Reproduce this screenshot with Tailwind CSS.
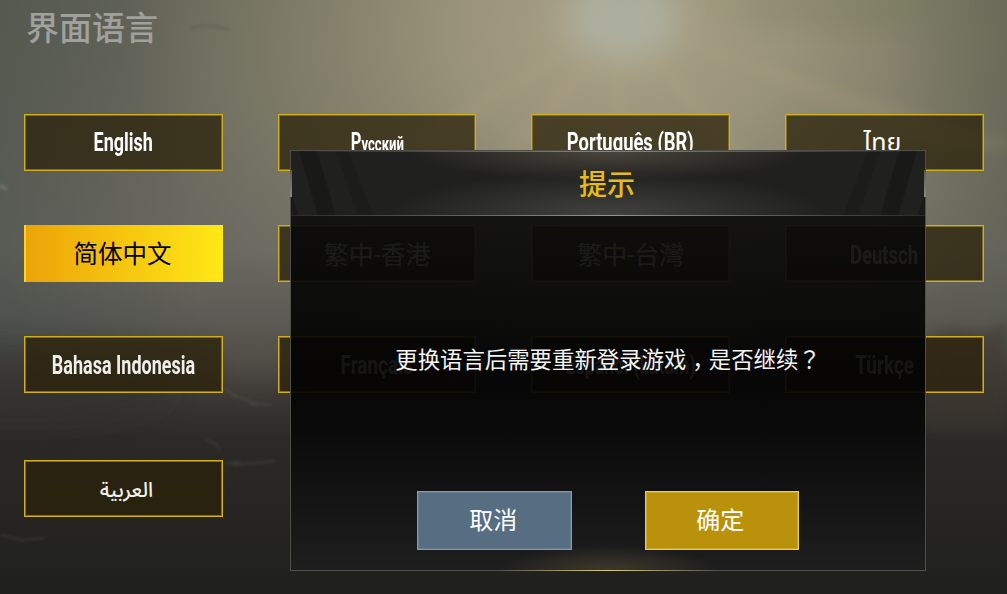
<!DOCTYPE html>
<html lang="zh">
<head>
<meta charset="UTF-8" />
<meta name="viewport" content="width=device-width, initial-scale=1.0"/>
<title>界面语言</title>
<script src="https://cdn.jsdelivr.net/npm/@tailwindcss/browser@4"></script>
</head>
<body class="relative w-[1007px] h-[594px] overflow-hidden bg-[#1f1f1d] font-['Roboto','Noto_Sans_CJK_SC',sans-serif]">

  <!-- 背景 -->
  <svg class="absolute inset-0" width="1007" height="594" viewBox="0 0 1007 594">
    <defs>
      <linearGradient id="sky" x1="0" y1="0" x2="0" y2="1">
        <stop offset="0" stop-color="#65665a"/>
        <stop offset=".2" stop-color="#69695e"/>
        <stop offset=".42" stop-color="#6b6a62"/>
        <stop offset=".54" stop-color="#5b5a54"/>
        <stop offset=".63" stop-color="#423f3b"/>
        <stop offset=".74" stop-color="#2b2a27"/>
        <stop offset="1" stop-color="#1f1f1d"/>
      </linearGradient>
      <radialGradient id="glow" gradientUnits="userSpaceOnUse" cx="0" cy="0" r="1" gradientTransform="translate(620 30) scale(500 350)">
        <stop offset="0" stop-color="#b5ab8c" stop-opacity=".9"/>
        <stop offset=".35" stop-color="#aaa184" stop-opacity=".74"/>
        <stop offset=".7" stop-color="#969072" stop-opacity=".44"/>
        <stop offset="1" stop-color="#8b8468" stop-opacity="0"/>
      </radialGradient>
      <linearGradient id="edge" x1="0" y1="0" x2="1" y2="0">
        <stop offset="0" stop-color="#3c4440" stop-opacity=".4"/>
        <stop offset=".2" stop-color="#3c4440" stop-opacity="0"/>
        <stop offset=".88" stop-color="#4a5040" stop-opacity="0"/>
        <stop offset="1" stop-color="#4a5040" stop-opacity=".25"/>
      </linearGradient>
      <filter id="b4" x="-50%" y="-50%" width="200%" height="200%"><feGaussianBlur stdDeviation="6"/></filter>
      <filter id="b14" x="-50%" y="-100%" width="200%" height="300%"><feGaussianBlur stdDeviation="16"/></filter>
      <filter id="b1" x="-50%" y="-200%" width="200%" height="500%"><feGaussianBlur stdDeviation="1.4"/></filter>
    </defs>
    <rect width="1007" height="594" fill="url(#sky)"/>
    <rect width="1007" height="594" fill="url(#glow)"/>
    <rect width="1007" height="360" fill="url(#edge)"/>
    <!-- 陽光 -->
    <ellipse cx="622" cy="18" rx="58" ry="42" fill="#adb2a4" opacity=".8" filter="url(#b14)"/>
    <g fill="#c2b080" opacity=".13" filter="url(#b4)">
      <path d="M600 30L380 150H430Z"/>
      <path d="M610 35L500 150H530Z"/>
      <path d="M615 35L612 150H630Z"/>
      <path d="M635 35L720 150H750Z"/>
      <path d="M650 30L940 150H1007V140Z"/>
    </g>
    <path d="M720 0H960L900 22L760 18Z" fill="#6c7550" opacity=".4" filter="url(#b14)"/>
    <!-- 遠山與地面 -->
    <ellipse cx="20" cy="385" rx="150" ry="35" fill="#2a2b29" opacity=".4" filter="url(#b14)"/>
    <ellipse cx="255" cy="355" rx="50" ry="30" fill="#6d655b" opacity=".25" filter="url(#b14)"/>
    <path d="M926 338L950 328L965 331L985 333L1007 322V430H926Z" fill="#3d342e" opacity=".5" filter="url(#b4)"/>
    <g fill="none" stroke="#77766b" stroke-width="2" opacity=".22" filter="url(#b1)">
      <path d="M224 388Q236 398 258 404L272 405"/>
      <path d="M232 396Q246 398 256 406"/>
      <path d="M205 440Q214 440 220 449"/>
      <path d="M224 463L240 462L232 465L275 461"/>
      <path d="M0 535L22 540L44 538"/>
    </g>
    <path d="M190 29Q207 22 230 30" fill="none" stroke="#4d5044" stroke-width="3" opacity=".3" filter="url(#b1)"/>
    <path d="M0 186L7 189" stroke="#789087" stroke-width="3" opacity=".6" filter="url(#b1)"/>
  </svg>

  <div class="relative pl-[26px] pt-[5px]">
    <h1 class="h-[47px] text-[33px] leading-[48px] font-medium text-[#a0a09d]">界面语言</h1>
  </div>

  <!-- 語言選項 -->
  <div class="relative mt-[62px] ml-[24px] grid grid-cols-[repeat(4,198.8px)] gap-x-[54.9px] auto-rows-[57px] gap-y-[54px] text-white text-[25px] font-bold whitespace-nowrap">
    <button class="border border-[#cfae22] inset-ring inset-ring-[#84701c] bg-[#2b2209]/75 flex items-center justify-center"><span class="scale-x-[.72]">English</span></button>
    <button class="border border-[#cfae22] inset-ring inset-ring-[#84701c] bg-[#2b2209]/75 flex items-center justify-center"><span class="scale-x-[.66]">P<span class="text-[20px]">усский</span></span></button>
    <button class="border border-[#cfae22] inset-ring inset-ring-[#84701c] bg-[#2b2209]/75 flex items-center justify-center"><span class="scale-x-[.735]">Português (BR)</span></button>
    <button class="border border-[#cfae22] inset-ring inset-ring-[#84701c] bg-[#2b2209]/75 flex items-center justify-center"><span class="font-normal pt-[3px] pr-[4px] text-[25px] font-['Noto_Sans_Thai','Noto_Sans',sans-serif]">ไทย</span></button>

    <button class="border-l-2 border-[#ffd21c] bg-linear-to-r from-[#eba408] to-[#ffe816] flex items-center justify-center pt-[4px] pr-[4px] text-black font-normal text-[24.5px]">简体中文</button>
    <button class="border border-[#cfae22] inset-ring inset-ring-[#84701c] bg-[#2b2209]/75 flex items-center justify-center pt-[4px] font-normal">繁中-香港</button>
    <button class="border border-[#cfae22] inset-ring inset-ring-[#84701c] bg-[#2b2209]/75 flex items-center justify-center pt-[4px] font-normal">繁中-台灣</button>
    <button class="border border-[#cfae22] inset-ring inset-ring-[#84701c] bg-[#2b2209]/75 flex items-center justify-center pt-[4px]"><span class="scale-x-[.74]">Deutsch</span></button>

    <button class="border border-[#cfae22] inset-ring inset-ring-[#84701c] bg-[#2b2209]/75 flex items-center justify-center pt-[3px] text-[#f0efec]"><span class="scale-x-[.72]">Bahasa Indonesia</span></button>
    <button class="border border-[#cfae22] inset-ring inset-ring-[#84701c] bg-[#2b2209]/75 flex items-center justify-center pt-[3px]"><span class="scale-x-[.76]">Français</span></button>
    <button class="border border-[#cfae22] inset-ring inset-ring-[#84701c] bg-[#2b2209]/75 flex items-center justify-center pt-[3px]"><span class="scale-x-[.71]">Español (Latam)</span></button>
    <button class="border border-[#cfae22] inset-ring inset-ring-[#84701c] bg-[#2b2209]/75 flex items-center justify-center pt-[3px]"><span class="scale-x-[.76]">Türkçe</span></button>

    <button class="mt-[13px] h-[57px] border border-[#cfae22] inset-ring inset-ring-[#84701c] bg-[#2b2209]/75 flex items-center justify-center pl-[6px] pt-[5px] text-[#f0efec]"><span dir="rtl" class="font-medium text-[20.5px] font-['Noto_Sans_Arabic','Noto_Sans','DejaVu_Sans',sans-serif]">العربية</span></button>
  </div>

  <!-- 提示視窗 -->
  <div class="absolute left-[290px] top-[150px] w-[636px] h-[421px] border border-[#4e4e4b] flex flex-col">
    <div class="relative h-[65px] shrink-0 bg-[#20201e] overflow-hidden">
      <div class="absolute inset-0 bg-[radial-gradient(ellipse_200px_30px_at_50%_0%,#4a453d,transparent)]"></div>
      <div class="absolute inset-0 bg-[radial-gradient(ellipse_220px_44px_at_50%_100%,#42423f,transparent)]"></div>
      <svg class="absolute inset-0" width="634" height="65" viewBox="0 0 634 65" fill="#151514">
        <path d="M8 0H26L45 65H27Z" opacity=".6"/>
        <path d="M45 0H58L82 65H67Z" opacity=".3"/>
        <path d="M626 0H608L589 65H607Z" opacity=".6"/>
        <path d="M589 0H576L552 65H567Z" opacity=".3"/>
        <path d="M0 43L8 65H0ZM634 43L626 65H634Z" opacity=".6"/>
      </svg>
      <div class="absolute inset-x-0 top-0 h-px bg-linear-to-r from-transparent via-[#8d846c] to-transparent"></div>
      <div class="absolute inset-x-0 bottom-0 h-px bg-linear-to-r from-[#2c2c2a] via-[#98958a] to-[#2c2c2a]"></div>
      <h2 class="relative pt-[2px] pr-[2px] text-center text-[28px] leading-[66px] font-medium text-[#e6bd18]">提示</h2>
    </div>
    <div class="relative flex-1 bg-linear-to-b from-[#0a0a09]/92 via-[#030303]/93 via-45% to-[#1e1e1e]/98 flex flex-col items-center">
      <div class="absolute inset-x-0 bottom-0 h-[24px] bg-[radial-gradient(ellipse_110px_24px_at_50%_100%,#3d392b,transparent)]"></div>
      <p class="relative mt-[125px] h-[34px] leading-[34px] text-[22.4px] text-[#f4f4f4] whitespace-nowrap font-['Noto_Sans_CJK_SC',sans-serif]">更换语言后需要重新登录游戏<span class="relative left-[6px]">，</span>是否继续<span lang="zh-TW" class="font-['Noto_Sans_CJK_TC',sans-serif]">？</span></p>
      <div class="relative mt-[116px] flex gap-[73px] text-[24px] text-white text-shadow-[1px_2px_2px_rgb(0_0_0/0.6)]">
        <button class="w-[154.5px] h-[59px] border border-[#869cae] inset-ring inset-ring-[#647b90] bg-[#566d82] pr-[2px]">取消</button>
        <button class="w-[154.5px] h-[59px] border border-[#e2cf5e] inset-ring inset-ring-[#cba524] bg-[#ba910a] pr-[3px]">确定</button>
      </div>
    </div>
    <!-- 邊框高光 -->
    <div class="absolute -left-px top-[19px] w-[2px] h-[27px] bg-linear-to-b from-[#5a5a56] to-[#8a8a84]"></div>
    <div class="absolute -right-px top-[19px] w-[2px] h-[27px] bg-linear-to-b from-[#5a5a56] to-[#8a8a84]"></div>
    <div class="absolute left-[205px] -bottom-px w-[224px] h-px bg-linear-to-r from-transparent via-[#dccb78] to-transparent"></div>
  </div>
</body>
</html>
